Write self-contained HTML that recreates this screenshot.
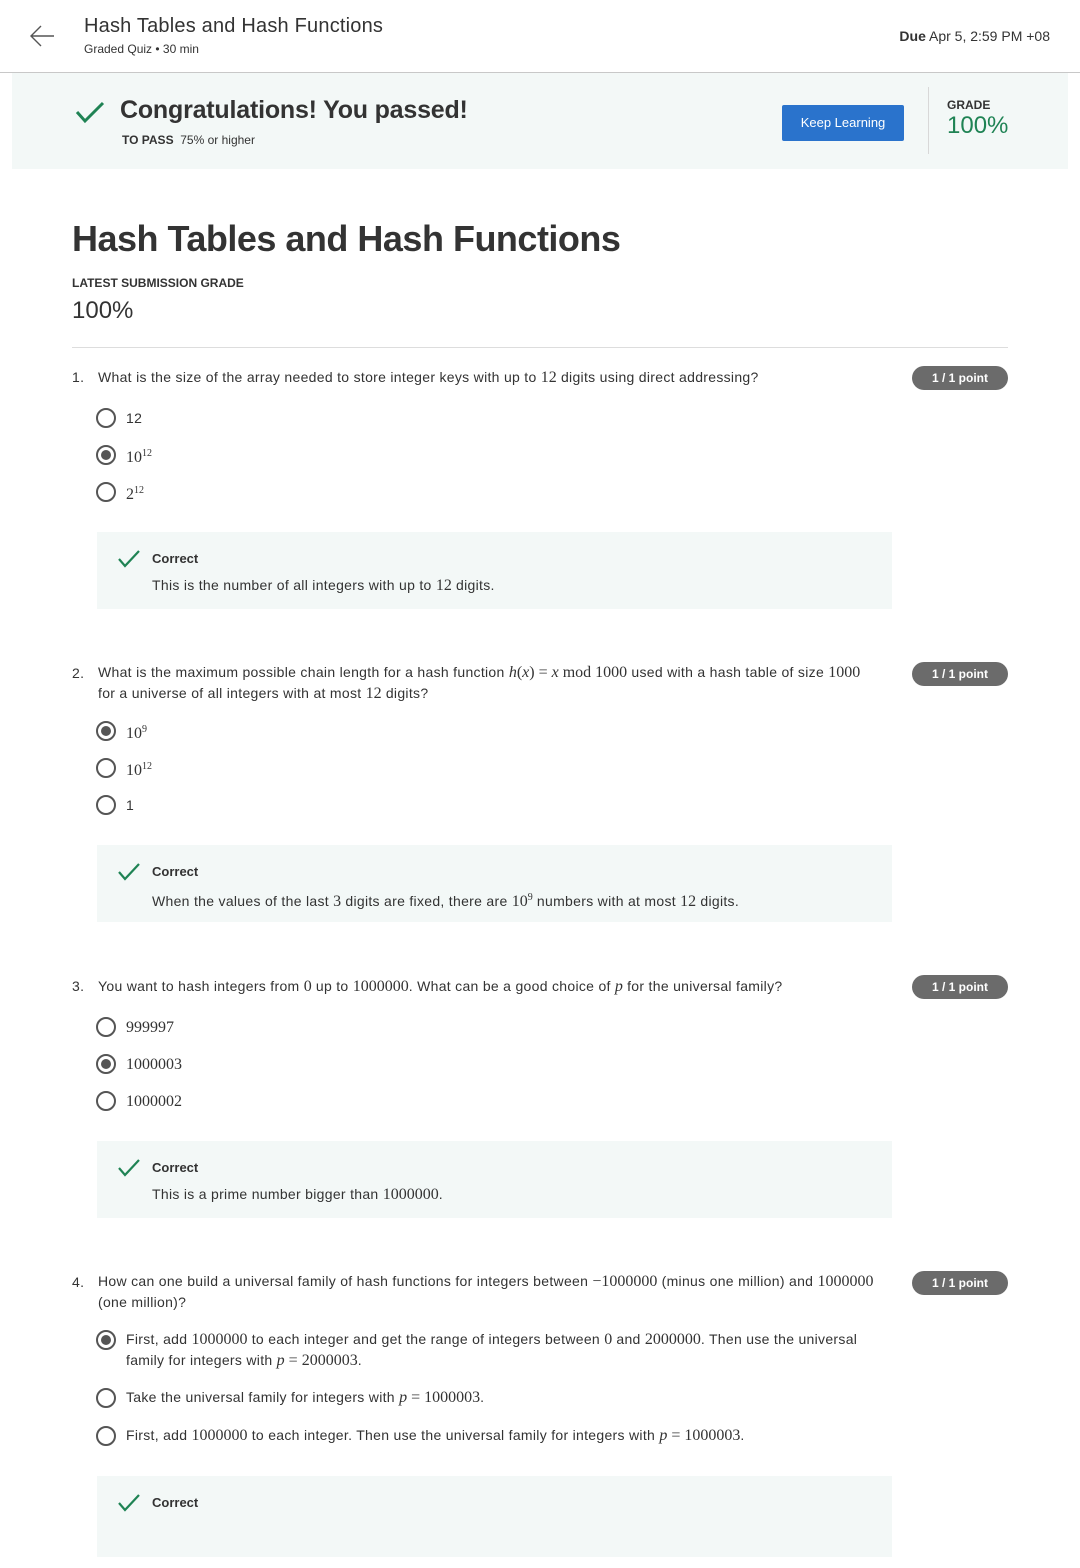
<!DOCTYPE html>
<html><head><meta charset="utf-8"><style>
body{margin:0;width:1080px;height:1568px;position:relative;background:#fff;font-family:"Liberation Sans",sans-serif;color:#1f1f1f;overflow:hidden}
.a{position:absolute;white-space:nowrap}
.m{font-family:"Liberation Serif",serif;font-size:16px;letter-spacing:0}
sup{font-size:10px;vertical-align:6px;font-family:"Liberation Serif",serif}
i{font-family:"Liberation Serif",serif}
.q{font-size:14px;line-height:20px;color:#333;letter-spacing:0.3px}
.r{position:absolute;width:16px;height:16px;border:2px solid #555;border-radius:50%;box-sizing:content-box;left:96px}
.r.s::after{content:"";position:absolute;left:3px;top:3px;width:10px;height:10px;border-radius:50%;background:#555}
.pill{position:absolute;left:912px;width:96px;height:24px;border-radius:12px;background:#6b6b6b;color:#fff;font-weight:bold;font-size:12px;line-height:24px;text-align:center}
.fb{position:absolute;left:97px;width:795px;background:#f3f8f7}
.ck{position:absolute}
.cor{position:absolute;left:152px;font-weight:bold;font-size:13px;line-height:16px;color:#333}
.opt{position:absolute;left:126px;font-size:14px;line-height:20px;color:#333;white-space:nowrap;letter-spacing:0.3px}
</style></head><body>
<svg class="a" style="left:28px;top:24px" width="28" height="24" viewBox="0 0 28 24"><path d="M26 12H3M13 2L3 12l10 10" fill="none" stroke="#555" stroke-width="1.4"/></svg>
<div class="a" style="left:84px;top:13px;font-size:20px;line-height:26px;color:#333;letter-spacing:0.2px">Hash Tables and Hash Functions</div>
<div class="a" style="left:84px;top:41px;font-size:12px;line-height:16px;color:#333">Graded Quiz • 30 min</div>
<div class="a" style="right:30px;top:27px;font-size:14px;line-height:18px;color:#333"><b>Due</b> Apr 5, 2:59 PM +08</div>
<div class="a" style="left:0;top:72px;width:1080px;height:1px;background:#c8c8c8"></div>
<div class="a" style="left:12px;top:73px;width:1056px;height:96px;background:#f3f8f7"></div>
<svg class="a" style="left:74px;top:99px" width="32" height="26" viewBox="0 0 32 26"><path d="M3 13l8 9L29 4" fill="none" stroke="#1f8354" stroke-width="3"/></svg>
<div class="a" style="left:120px;top:95px;font-size:25px;line-height:30px;font-weight:bold;color:#333;letter-spacing:-0.2px">Congratulations! You passed!</div>
<div class="a" style="left:122px;top:132px;font-size:12px;line-height:16px;color:#333"><b>TO PASS</b>&nbsp; 75% or higher</div>
<div class="a" style="left:782px;top:105px;width:122px;height:36px;background:#2a73cc;border-radius:2px;color:#fff;font-size:13px;line-height:36px;text-align:center">Keep Learning</div>
<div class="a" style="left:928px;top:87px;width:1px;height:67px;background:#d8d8d8"></div>
<div class="a" style="left:947px;top:97px;font-size:12px;line-height:16px;font-weight:bold;color:#333">GRADE</div>
<div class="a" style="left:947px;top:111px;font-size:24px;line-height:30px;color:#1f8354">100%</div>
<div class="a" style="left:72px;top:217px;font-size:36px;line-height:44px;font-weight:bold;color:#333;letter-spacing:-0.5px">Hash Tables and Hash Functions</div>
<div class="a" style="left:72px;top:275px;font-size:12px;line-height:16px;font-weight:bold;color:#333">LATEST SUBMISSION GRADE</div>
<div class="a" style="left:72px;top:296px;font-size:24px;line-height:30px;color:#333">100%</div>
<div class="a" style="left:72px;top:347px;width:936px;height:1px;background:#ddd"></div>

<!-- Q1 -->
<div class="a q" style="left:72px;top:367px">1.</div>
<div class="a q" style="left:98px;top:367px">What is the size of the array needed to store integer keys with up to <span class="m">12</span> digits using direct addressing?</div>
<div class="pill" style="top:366px">1 / 1 point</div>
<div class="r" style="top:408px"></div><div class="opt" style="top:408px">12</div>
<div class="r s" style="top:445px"></div><div class="opt" style="top:444px"><span class="m">10<sup>12</sup></span></div>
<div class="r" style="top:482px"></div><div class="opt" style="top:481px"><span class="m">2<sup>12</sup></span></div>
<div class="fb" style="top:532px;height:77px"></div>
<svg class="ck" style="left:117px;top:549px" width="24" height="20" viewBox="0 0 24 20"><path d="M2 10l6 7L22 2" fill="none" stroke="#1f8354" stroke-width="2.2"/></svg>
<div class="cor" style="top:551px">Correct</div>
<div class="opt" style="left:152px;top:575px">This is the number of all integers with up to <span class="m">12</span> digits.</div>

<!-- Q2 -->
<div class="a q" style="left:72px;top:663px">2.</div>
<div class="a q" style="left:98px;top:662px;white-space:normal;width:780px">What is the maximum possible chain length for a hash function <span class="m"><i>h</i>(<i>x</i>) = <i>x</i> mod 1000</span> used with a hash table of size <span class="m">1000</span> for a universe of all integers with at most <span class="m">12</span> digits?</div>
<div class="pill" style="top:662px">1 / 1 point</div>
<div class="r s" style="top:721px"></div><div class="opt" style="top:720px"><span class="m">10<sup>9</sup></span></div>
<div class="r" style="top:758px"></div><div class="opt" style="top:757px"><span class="m">10<sup>12</sup></span></div>
<div class="r" style="top:795px"></div><div class="opt" style="top:795px">1</div>
<div class="fb" style="top:845px;height:77px"></div>
<svg class="ck" style="left:117px;top:862px" width="24" height="20" viewBox="0 0 24 20"><path d="M2 10l6 7L22 2" fill="none" stroke="#1f8354" stroke-width="2.2"/></svg>
<div class="cor" style="top:864px">Correct</div>
<div class="opt" style="left:152px;top:888px">When the values of the last <span class="m">3</span> digits are fixed, there are <span class="m">10<sup>9</sup></span> numbers with at most <span class="m">12</span> digits.</div>

<!-- Q3 -->
<div class="a q" style="left:72px;top:976px">3.</div>
<div class="a q" style="left:98px;top:976px">You want to hash integers from <span class="m">0</span> up to <span class="m">1000000</span>. What can be a good choice of <i class="m">p</i> for the universal family?</div>
<div class="pill" style="top:975px">1 / 1 point</div>
<div class="r" style="top:1017px"></div><div class="opt" style="top:1017px"><span class="m">999997</span></div>
<div class="r s" style="top:1054px"></div><div class="opt" style="top:1054px"><span class="m">1000003</span></div>
<div class="r" style="top:1091px"></div><div class="opt" style="top:1091px"><span class="m">1000002</span></div>
<div class="fb" style="top:1141px;height:77px"></div>
<svg class="ck" style="left:117px;top:1158px" width="24" height="20" viewBox="0 0 24 20"><path d="M2 10l6 7L22 2" fill="none" stroke="#1f8354" stroke-width="2.2"/></svg>
<div class="cor" style="top:1160px">Correct</div>
<div class="opt" style="left:152px;top:1184px">This is a prime number bigger than <span class="m">1000000</span>.</div>

<!-- Q4 -->
<div class="a q" style="left:72px;top:1272px">4.</div>
<div class="a q" style="left:98px;top:1271px;white-space:normal;width:794px">How can one build a universal family of hash functions for integers between <span class="m">−1000000</span> (minus one million) and <span class="m">1000000</span> (one million)?</div>
<div class="pill" style="top:1271px">1 / 1 point</div>
<div class="r s" style="top:1330px"></div><div class="opt" style="top:1329px;white-space:normal;width:745px">First, add <span class="m">1000000</span> to each integer and get the range of integers between <span class="m">0</span> and <span class="m">2000000</span>. Then use the universal family for integers with <span class="m"><i>p</i> = 2000003</span>.</div>
<div class="r" style="top:1388px"></div><div class="opt" style="top:1387px">Take the universal family for integers with <span class="m"><i>p</i> = 1000003</span>.</div>
<div class="r" style="top:1426px"></div><div class="opt" style="top:1425px">First, add <span class="m">1000000</span> to each integer. Then use the universal family for integers with <span class="m"><i>p</i> = 1000003</span>.</div>
<div class="fb" style="top:1476px;height:81px"></div>
<svg class="ck" style="left:117px;top:1493px" width="24" height="20" viewBox="0 0 24 20"><path d="M2 10l6 7L22 2" fill="none" stroke="#1f8354" stroke-width="2.2"/></svg>
<div class="cor" style="top:1495px">Correct</div>
</body></html>
